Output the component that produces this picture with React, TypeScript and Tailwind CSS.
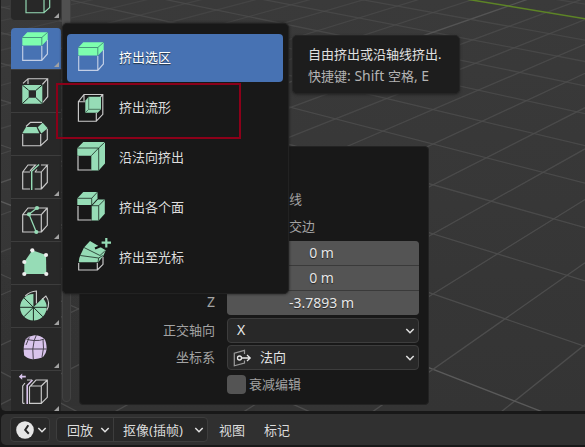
import type { ReactNode } from "react";

const MINT = "#96dcb6";
const BRIGHT = "#7dffae";
const LILAC = "#d9c4ec";
const WHITE = "#cbcbcb";
const DARK = "#1b2a22";

function Icon({ children }: { children: ReactNode }) {
  return (
    <svg viewBox="0 0 50 42" className="block h-[42px] w-[50px] shrink-0" fill="none" strokeWidth="1.15">
      {children}
    </svg>
  );
}

const CubeIcon = () => (
  <Icon>
    <path d="M15 5V34.7H33V5M33 34.7L38.7 29.5V5" stroke={MINT} />
  </Icon>
);

const ExtrudeIcon = () => (
  <Icon>
    <path d="M11.7 19V33.3H30.8L36.4 27V13M30.8 33.3V19" stroke="#c3cfe6" />
    <path d="M11.3 10.5L16.3 5.3H36.7V12.5L31 18.5H11.3Z" fill={BRIGHT} />
    <path d="M11.3 10.5H30.8L36.7 5.3M30.8 10.5V18.5" stroke="#2f6a6a" strokeWidth="0.7" />
  </Icon>
);

const InsetIcon = () => (
  <Icon>
    <path d="M12 13.3L17 8.7H36.7V26.7L31.8 32.5M31.3 14.5L36.7 8.7M17 8.7V14" stroke={WHITE} />
    <path d="M11.3 15H31.3V33.7H11.3ZM17.7 20.3V27.7H25V20.3Z" fill={MINT} fillRule="evenodd" />
    <path d="M11.3 15L17.7 20.3M31.3 15L25 20.3M11.3 33.7L17.7 27.7M31.3 33.7L25 27.7" stroke={DARK} strokeWidth="1" />
  </Icon>
);

const BevelIcon = () => (
  <Icon>
    <path d="M11.7 21V32.7H29.7V21M29.7 32.7L36.3 26.5V16M15 13.5L19.5 9.3H31" stroke={WHITE} />
    <path d="M15 14H25.5L28.3 20.3H11.3Z" fill={MINT} />
    <path d="M31.7 9.7L36.7 15.3L30.3 20.5L26.7 14.3Z" fill={MINT} />
  </Icon>
);

const LoopCutIcon = () => (
  <Icon>
    <path d="M19 16H11.7V33H19M11.7 16L17 9H24.5L19 15M23.7 16H30.3V33H23.7M30.3 16L36.3 9H30M36.3 9V26.5L30.3 33M24 16L26 13.5" stroke={WHITE} />
    <path d="M20.7 34V15.2L28 8.4" stroke={MINT} strokeWidth="1.4" />
  </Icon>
);

const KnifeIcon = () => (
  <Icon>
    <path d="M11.7 15.7H30.3V33H11.7ZM11.7 15.7L17 9H36.3V26.3L30.3 33M30.3 15.7L36.3 9" stroke={WHITE} />
    <path d="M26 9L18 15.3L25.3 33" stroke={MINT} strokeWidth="1.3" />
    <g fill={MINT}>
      <circle cx="26" cy="9" r="2.1" />
      <circle cx="18" cy="15.3" r="2.1" />
      <circle cx="25.3" cy="33" r="2.1" />
    </g>
  </Icon>
);

const POLY_POINTS = [
  [21.3, 8.3],
  [35, 13],
  [35.3, 32],
  [13.3, 32],
  [13.3, 20],
];

const PolyBuildIcon = () => (
  <Icon>
    <path d="M21.3 8.3L35 13L35.3 32H13.3V20Z" fill={MINT} />
    {POLY_POINTS.map(([x, y]) => (
      <circle key={`${x}-${y}`} cx={x} cy={y} r="2.1" fill="#eeeeee" />
    ))}
  </Icon>
);

const SpinIcon = () => (
  <Icon>
    <path d="M22.4 22.3L31.8 12.9A13.3 13.3 0 1 1 22.4 9Z" fill={MINT} />
    <path d="M22.4 22.3L31.8 31.7M22.4 22.3L13 31.7M22.4 22.3L13 12.9M9 22.3H36M22.4 22V36" stroke="#1d2b24" strokeWidth="1" />
    <path d="M14.3 11Q19 6.3 25.4 6V18.5M31 14.5L34.9 11Q40 18 35.6 25.5" stroke={WHITE} />
  </Icon>
);

const SmoothIcon = () => (
  <Icon>
    <path d="M15 10.5Q18 8 23.5 7.3Q30 7.5 33.5 11Q35.5 14 35.7 21Q35 26 32.5 28.5Q28 31.3 21.5 31.3Q16 30.5 13.2 27.5Q11.5 19 15 10.5Z" fill={LILAC} />
    <path d="M12 21H35.8M22.3 31.3Q20.8 21 23.2 12.3M15 10.8Q19 12.5 23.2 12.5Q29 13 33.2 11M23.2 12.5L25.3 7.3M18.3 9.2L15 17M32 11.5Q33.5 20 31 29" stroke="#3b3541" strokeWidth="0.9" />
  </Icon>
);

const EdgeSlideIcon = () => (
  <Icon>
    <path d="M11.7 32.3V15L14 12M11.7 32.3H13.5M19 15H30.3V32.3H18.5V16L25 9H36.3V26.3L30.3 32.3M30.3 15L36.3 9M16 9H21" stroke={WHITE} />
    <path d="M16.2 33V14.5L21.5 9" stroke={LILAC} strokeWidth="1.6" />
    <path d="M7.8 5.7L11.2 2.6V4.8H14.8V6.6H11.2V8.8Z" fill={LILAC} />
  </Icon>
);

const ManifoldIcon = () => (
  <Icon>
    <path d="M18 14.7H11.4V34.2H29.3V26M29.3 34.2L35.8 27.3V7.5H17L11.4 14.7M17 7.5V14M33.5 10L35.8 7.5" stroke={WHITE} />
    <path d="M18.3 13.7L21.7 9.7H34V22.3L30.7 25.7H18.3Z" fill={MINT} />
    <path d="M21.7 9.7V22.3H34M21.7 22.3L18.3 25.7" stroke="#38624c" strokeWidth="0.8" />
  </Icon>
);

const NormalsIcon = () => (
  <Icon>
    <path d="M11 19V33H24.5" stroke={WHITE} />
    <path d="M10.3 11L16.3 5H38V26.5L31.7 33.5H24.3V18.7H10.3Z" fill={MINT} />
    <path d="M10.3 11H31.7L38 5M31.7 11V33.5M24.3 18.7L31.7 11" stroke={DARK} strokeWidth="0.8" />
  </Icon>
);

const IndividualIcon = () => (
  <Icon>
    <path d="M11 19V33H24.5" stroke={WHITE} />
    <path d="M10.3 11.3L16.3 5H30.5V11.5L24.7 18H10.3Z" fill={MINT} />
    <path d="M24.7 18.7L30.7 12.5H37.8V26.7L31.7 33.5H24.7Z" fill={MINT} />
    <path d="M10.3 11.3H24.7L30.5 5M24.7 11.3V18.7H31.7L37.8 12.5M31.7 18.7V33.5M24.7 18.7L30.7 12.3" stroke={DARK} strokeWidth="0.8" />
  </Icon>
);

const ToCursorIcon = () => (
  <Icon>
    <path d="M11.7 26V33H30.3V26M30.3 33L36 27.3V19.7" stroke={WHITE} />
    <path d="M11.7 25.3Q12 20.5 13.7 17.5L17 10.5L23 4L38.7 13.3L36.5 18.5L31.3 25.3Z" fill={MINT} />
    <path d="M13.3 18.5L31.7 21L31 25.3M17 10.5L33 18.5L37.8 14M31.7 21L35.8 18.5" stroke={DARK} strokeWidth="0.8" />
    <path d="M28 11.5L35 8.5" stroke="#101010" strokeWidth="2.2" />
    <path d="M39.3 1V10.4M34.6 5.7H44" stroke={MINT} strokeWidth="2.2" />
  </Icon>
);

const TOOLS: { icon: () => ReactNode; more: boolean }[] = [
  { icon: InsetIcon, more: false },
  { icon: BevelIcon, more: false },
  { icon: LoopCutIcon, more: true },
  { icon: KnifeIcon, more: true },
  { icon: PolyBuildIcon, more: false },
  { icon: SpinIcon, more: true },
  { icon: SmoothIcon, more: true },
  { icon: EdgeSlideIcon, more: true },
];

const MENU = [
  { label: "挤出选区", icon: ExtrudeIcon },
  { label: "挤出流形", icon: ManifoldIcon },
  { label: "沿法向挤出", icon: NormalsIcon },
  { label: "挤出各个面", icon: IndividualIcon },
  { label: "挤出至光标", icon: ToCursorIcon },
];

function Corner() {
  return (
    <svg viewBox="0 0 5 5" className="absolute right-[2px] bottom-[2px] h-[5px] w-[5px]">
      <path d="M5 0V5H0Z" fill="#a2a2a2" />
    </svg>
  );
}

function Chevron() {
  return (
    <svg viewBox="0 0 10 6" className="h-[6px] w-[10px] shrink-0" fill="none">
      <path d="M1.3 1L5 4.7L8.7 1" stroke="#e2e2e2" strokeWidth="1.5" />
    </svg>
  );
}

// Floor grid in perspective: each family of lines meets at its own point on the horizon.
function FloorGrid() {
  const crossX = 433;
  const horizon = -300;
  const steps = Array.from({ length: 27 }, (_, i) => i - 2);
  const lineThrough = (n: number, vx: number, fromX: number) => {
    const y = 1 / (0.001494 + 0.0001895 * n) + horizon;
    const slope = (y - horizon) / (crossX - vx);
    return { y1: y + slope * (fromX - crossX), y2: y + slope * (585 - crossX) };
  };
  return (
    <svg viewBox="0 0 585 411" className="absolute inset-0 h-[411px] w-[585px]">
      {steps.map((n) => {
        const a = lineThrough(n, -1290, 0);
        const b = lineThrough(n, 1388, 0);
        const fade = Math.max(0.4, 1 - Math.max(0, n) * 0.035);
        return (
          <g key={n} strokeWidth="1.3">
            {n !== 10 && (
              <line x1="0" x2="585" y1={a.y1} y2={a.y2} stroke={n === 0 ? "#5a5a5a" : "#4d4d4d"} opacity={fade} />
            )}
            <line x1="0" x2="585" y1={b.y1} y2={b.y2} stroke={n === 8 ? "#5e5e5e" : "#4d4d4d"} opacity={fade} />
          </g>
        );
      })}
      <line x1="465" y1="-1.1" x2="585" y2="18.7" stroke="#5d8426" strokeWidth="1.5" />
    </svg>
  );
}

function Toolbar() {
  return (
    <div className="absolute top-[-22px] left-[11px] flex w-[50px] flex-col">
      <div className="relative h-[42px] rounded-b-[4px] bg-[#282828] shadow-[0_0_0_1px_#3a3a3a]">
        <CubeIcon />
        <Corner />
      </div>
      <div className="relative mt-[8px] flex h-[41px] items-end rounded-t-[4px] bg-[#4772b3]">
        <ExtrudeIcon />
        <Corner />
      </div>
      {TOOLS.map(({ icon: ToolIcon, more }, i) => (
        <div key={i} className="relative h-[43px] border-t border-[#3d3d3d] bg-[#282828]">
          <ToolIcon />
          {more && <Corner />}
        </div>
      ))}
    </div>
  );
}

function Field({ value }: { value: string }) {
  return (
    <div className="flex flex-1 items-center justify-center bg-[#545454] pr-[3px] pb-px text-[14px] text-[#e6e6e6] [text-shadow:0_1px_1px_#222]">
      {value}
    </div>
  );
}

function RedoPanel() {
  return (
    <div className="absolute top-[146px] left-[79px] h-[259px] w-[350px] rounded-[4px] border border-[#232323] bg-[#181818] text-[13px] text-[#a3a3a3]">
      <div className="flex flex-col pt-[38px] pr-[9px]">
        <div className="flex h-[27px] items-center pl-[209px]">线</div>
        <div className="flex h-[27px] items-center pl-[209px]">交边</div>
        <div className="mt-[2px] flex">
          <div className="flex w-[135px] items-end justify-end pb-px">
            <span className="text-[14px] leading-[24px]">Z</span>
          </div>
          <div className="ml-[12px] flex h-[74px] flex-1 flex-col gap-px overflow-hidden rounded-[4px] bg-[#3a3a3a]">
            <Field value="0 m" />
            <Field value="0 m" />
            <Field value="-3.7893 m" />
          </div>
        </div>
        <div className="mt-[3px] flex h-[25px] items-center">
          <span className="w-[135px] pb-[2px] text-right">正交轴向</span>
          <div className="ml-[12px] flex h-[25px] flex-1 items-center justify-between rounded-[4px] border border-[#3d3d3d] bg-[#282828] pr-[3px] pl-[9px] text-[14px] text-[#e6e6e6]">
            <span className="pb-px">X</span>
            <Chevron />
          </div>
        </div>
        <div className="mt-[2px] flex h-[25px] items-center">
          <span className="w-[135px] pb-[2px] text-right">坐标系</span>
          <div className="ml-[12px] flex h-[25px] flex-1 items-center rounded-[4px] border border-[#3d3d3d] bg-[#282828] pr-[3px] pl-[5px] text-[#e6e6e6]">
            <svg viewBox="0 0 19 18" className="mr-[8px] h-[18px] w-[19px]" fill="none">
              <path d="M11.5 5V1.3L1.3 4.2V16.8L11.5 14V11.5" stroke="#9a9a9a" strokeWidth="1.2" />
              <circle cx="6.5" cy="9" r="2" stroke="#e6e6e6" strokeWidth="1.3" />
              <path d="M8.5 9H17M14 6L17.2 9L14 12" stroke="#e6e6e6" strokeWidth="1.3" />
            </svg>
            <span className="flex-1 pb-[2px]">法向</span>
            <Chevron />
          </div>
        </div>
        <div className="mt-[5px] flex h-[19px] items-center pl-[147px]">
          <div className="mr-[3px] h-[19px] w-[19px] rounded-[4px] bg-[#545454]" />
          <span className="pb-[2px]">衰减编辑</span>
        </div>
      </div>
    </div>
  );
}

function ExtrudeMenu() {
  return (
    <div className="absolute top-[23px] left-[62px] flex h-[271px] w-[227px] flex-col gap-[2px] rounded-[5px] border border-[#222] bg-[#181818] px-[4px] pt-[10px] shadow-[0_0_3px_#1c1c1c]">
      {MENU.map(({ label, icon: ItemIcon }, i) => (
        <div
          key={label}
          className={
            i === 0
              ? "flex h-[48px] w-[216px] items-center rounded-[4px] bg-[#4772b3] text-white [text-shadow:0_1px_1px_#234]"
              : "flex h-[48px] w-[216px] items-center text-[#dedede]"
          }
        >
          <ItemIcon />
          <span className="ml-[2px] pb-[2px] text-[13px]">{label}</span>
        </div>
      ))}
    </div>
  );
}

function TimelineHeader() {
  return (
    <div className="mt-[3px] flex h-[31px] items-center rounded-l-[5px] bg-[#303030] pl-[9px] text-[13px] text-[#dcdcdc]">
      <div className="flex h-[25px] w-[40px] items-center justify-between rounded-[4px] border border-[#3d3d3d] bg-[#282828] pr-[2px] pl-[5px]">
        <svg viewBox="0 0 18 18" className="h-[18px] w-[18px]">
          <circle cx="9" cy="9" r="8.8" fill="#e6e6e6" />
          <path d="M12.3 4.2L9.2 9L12.8 12.8" fill="none" stroke="#282828" strokeWidth="2" />
        </svg>
        <Chevron />
      </div>
      <div className="ml-[6px] flex h-[25px] w-[152px] items-stretch rounded-[4px] border border-[#3d3d3d] bg-[#282828]">
        <div className="flex w-[57px] items-center justify-between border-r border-[#3d3d3d] pr-[3px] pl-[10px]">
          回放
          <Chevron />
        </div>
        <div className="flex flex-1 items-center justify-between pr-[3px] pl-[9px]">
          <span>抠像(插帧)</span>
          <Chevron />
        </div>
      </div>
      <span className="ml-[11px]">视图</span>
      <span className="ml-[19px]">标记</span>
    </div>
  );
}

export default function App() {
  return (
    <div className="flex h-[447px] w-[585px] flex-col overflow-hidden bg-[#181818] pl-px font-['Noto_Sans','Noto_Sans_CJK_SC',sans-serif] leading-[20px] whitespace-nowrap">
      <div className="relative -ml-px h-[411px] w-[585px] shrink-0 overflow-hidden rounded-bl-[5px] border-l border-[#1e1e1e] bg-linear-to-b from-[#3a3a3a] to-[#343434]">
        <div className="absolute inset-y-0 -left-px w-[585px]">
          <FloorGrid />
          <div className="absolute top-0 left-[62px] h-[402px] w-[9px] rounded-b-[4px] border border-[#424242] bg-[#363636]" />
          <div className="absolute top-0 left-[62px] h-[40px] w-[8px] bg-[#505050]" />
          <Toolbar />
          <RedoPanel />
          <ExtrudeMenu />
          <div className="absolute top-[35px] left-[292px] h-[59px] w-[168px] rounded-[5px] border border-[#252525] bg-[#1d1d1d] pt-[8px] pl-[15px] text-[13px] leading-[21px] shadow-[0_1px_3px_#252525]">
            <div className="text-[#e0e0e0]">自由挤出或沿轴线挤出.</div>
            <div className="text-[#b4b4b4]">
              快捷键<span className="text-[14px]">: Shift </span>空格<span className="text-[14px]">, E</span>
            </div>
          </div>
          <div className="absolute top-[83px] left-[56px] h-[56px] w-[185px] border-2 border-[#8c0019]" />
        </div>
      </div>
      <TimelineHeader />
    </div>
  );
}
